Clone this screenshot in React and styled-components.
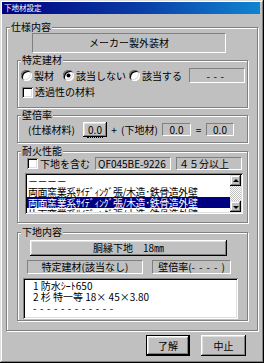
import React from 'react';
import styled, { createGlobalStyle, css } from 'styled-components';

const Global = createGlobalStyle`
  html, body { margin: 0; padding: 0; background: #c0c0c0; }
  body {
    font-family: "Noto Sans CJK JP", "Liberation Sans", sans-serif;
    font-size: 10px;
    color: #000;
  }
  * { box-sizing: border-box; }
`;

const Window = styled.div`
  width: 264px;
  height: 363px;
  background: #c0c0c0;
  padding: 2px 4px 0 2px;
  box-shadow: inset -1px -1px #000, inset 1px 1px #dfdfdf,
    inset -2px -2px #808080, inset 2px 2px #fff;
  display: flex;
  flex-direction: column;
  overflow: hidden;
`;

const TitleBar = styled.div`
  height: 12px;
  background: linear-gradient(90deg, #000080 0%, #0a3fa8 55%, #1084d0 100%);
  color: #fff;
  font-size: 7.5px;
  line-height: 12px;
  padding-left: 2px;
  white-space: nowrap;
`;

const etched = css`
  border: 1px solid #808080;
  box-shadow: inset 1px 1px 0 #fff, 1px 1px 0 #fff;
`;

const OuterGroup = styled.section`
  position: relative;
  ${etched};
  width: 252px;
  height: 304px;
  margin: 13px 0 0 4px;
  display: flex;
  flex-direction: column;
  flex: none;
`;

const Group = styled.section`
  position: relative;
  ${etched};
  width: 231px;
  height: ${p => p.$h}px;
  margin: ${p => p.$mt}px 0 0 10px;
  display: flex;
  flex-direction: column;
  flex: none;
`;

const Legend = styled.span`
  position: absolute;
  top: -7px;
  left: 3px;
  padding: 0 1px;
  background: #c0c0c0;
  line-height: 12px;
  white-space: nowrap;
`;

const Row = styled.div`
  display: flex;
  align-items: center;
  height: ${p => p.$h}px;
  margin-top: ${p => p.$mt}px;
  flex: none;
`;

const Choice = styled.label`
  display: inline-flex;
  align-items: center;
  width: ${p => (p.$w ? `${p.$w}px` : 'auto')};
  margin-left: ${p => p.$ml || 0}px;
  line-height: 12px;
  white-space: nowrap;
  flex: none;
`;

const RadioDot = styled.span`
  position: relative;
  width: 11px;
  height: 11px;
  margin-right: 2px;
  border-radius: 50%;
  background: #fff;
  box-shadow: inset 1px 1px 0 #808080, inset -1px -1px 0 #fff,
    inset 2px 2px 0 #000, inset -2px -2px 0 #dfdfdf;
  flex: none;
  &::after {
    content: '';
    display: ${p => (p.$on ? 'block' : 'none')};
    position: absolute;
    left: 4px;
    top: 4px;
    width: 3px;
    height: 3px;
    border-radius: 50%;
    background: #000;
    box-shadow: 0 0 0 0.5px #000;
  }
`;

const CheckBox = styled.span`
  width: 11px;
  height: 11px;
  margin-right: 2px;
  background: #fff;
  box-shadow: inset 1px 1px 0 #808080, inset -1px -1px 0 #fff,
    inset 2px 2px 0 #000, inset -2px -2px 0 #dfdfdf;
  flex: none;
`;

const Static = styled.div`
  width: ${p => p.$w}px;
  height: ${p => p.$h}px;
  margin-left: ${p => p.$ml || 0}px;
  margin-top: ${p => p.$mt || 0}px;
  padding-left: ${p => p.$pl || 0}px;
  display: flex;
  align-items: center;
  justify-content: ${p => (p.$left ? 'flex-start' : 'center')};
  border: 1px solid;
  border-color: #808080 #fff #fff #808080;
  line-height: 12px;
  white-space: nowrap;
  overflow: hidden;
  flex: none;
`;

const PushButton = styled.button`
  font: inherit;
  color: #000;
  width: ${p => p.$w}px;
  height: ${p => p.$h}px;
  margin: ${p => p.$mt || 0}px 0 0 ${p => p.$ml || 0}px;
  padding: 0;
  background: #c0c0c0;
  border: none;
  line-height: 12px;
  white-space: nowrap;
  flex: none;
  box-shadow: ${p =>
    p.$default
      ? 'inset 0 0 0 1px #000, inset -2px -2px #000, inset 2px 2px #fff, inset -3px -3px #808080, inset 3px 3px #dfdfdf'
      : 'inset -1px -1px #000, inset 1px 1px #fff, inset -2px -2px #808080, inset 2px 2px #dfdfdf'};
`;

const FocusText = styled.span`
  padding: 0 1px;
  border-bottom: 1px dotted #000;
  line-height: 10px;
`;

const Text = styled.span`
  width: ${p => p.$w}px;
  margin-left: ${p => p.$ml || 0}px;
  text-align: ${p => (p.$center ? 'center' : 'left')};
  line-height: 12px;
  white-space: nowrap;
  flex: none;
`;

const Dashes = styled.span`
  letter-spacing: ${p => p.$ls || 3}px;
`;

const sunken2 = css`
  background: #fff;
  box-shadow: inset 1px 1px 0 #808080, inset -1px -1px 0 #fff,
    inset 2px 2px 0 #000, inset -2px -2px 0 #dfdfdf;
`;

const ListBox = styled.div`
  ${sunken2};
  width: 218px;
  height: 41px;
  margin: 3px 0 0 7px;
  padding: 2px;
  display: flex;
  flex: none;
`;

const ListItems = styled.div`
  flex: 1;
  overflow: hidden;
`;

const ListItem = styled.div`
  height: 11px;
  line-height: 11px;
  padding-left: 1px;
  letter-spacing: -0.45px;
  white-space: nowrap;
  overflow: hidden;
  background: ${p => (p.$selected ? '#000080' : 'transparent')};
  color: ${p => (p.$selected ? '#fff' : '#000')};
`;

const ScrollBar = styled.div`
  width: 11px;
  display: flex;
  flex-direction: column;
  flex: none;
`;

const ScrollButton = styled.div`
  height: 11px;
  background: #c0c0c0;
  box-shadow: inset -1px -1px #000, inset 1px 1px #dfdfdf,
    inset -2px -2px #808080, inset 2px 2px #fff;
  display: flex;
  align-items: center;
  justify-content: center;
  flex: none;
`;

const Arrow = styled.span`
  width: 0;
  height: 0;
  border-left: 3px solid transparent;
  border-right: 3px solid transparent;
  ${p =>
    p.$up
      ? 'border-bottom: 3px solid #000; margin-top: -1px;'
      : 'border-top: 3px solid #000; margin-top: 1px;'}
`;

const Track = styled.div`
  flex: 1;
  background: repeating-conic-gradient(#fff 0 25%, #c0c0c0 0 50%) 0 0 / 2px 2px;
`;

const EditBox = styled.div`
  ${sunken2};
  width: 215px;
  height: 41px;
  margin: 4px 0 0 5px;
  padding: 2px 0 0 10px;
  flex: none;
  overflow: hidden;
`;

const EditLine = styled.div`
  height: 11px;
  line-height: 11px;
  white-space: nowrap;
`;

const ButtonBar = styled.div`
  display: flex;
  justify-content: flex-end;
  gap: 11px;
  margin-top: 4px;
  padding-right: 14px;
  flex: none;
`;

const fireOptions = [
  { text: '－－－－' },
  { text: '両面窯業系ｻｲﾃﾞｨﾝｸﾞ張/木造･鉄骨造外壁' },
  { text: '両面窯業系ｻｲﾃﾞｨﾝｸﾞ張/木造･鉄骨造外壁', selected: true },
  { text: '片面窯業系ｻｲﾃﾞｨﾝｸﾞ張/木造･鉄骨造外壁' },
];

export default function App() {
  return (
    <>
      <Global />
      <Window>
        <TitleBar>下地材設定</TitleBar>
        <OuterGroup>
          <Legend>仕様内容</Legend>
          <Static $w={194} $h={20} $ml={25} $mt={5}>メーカー製外装材</Static>

          <Group $h={48} $mt={7}>
            <Legend>特定建材</Legend>
            <Row $h={15} $mt={7}>
              <Choice $w={42} $ml={3}><RadioDot />製材</Choice>
              <Choice $w={66}><RadioDot $on />該当しない</Choice>
              <Choice $w={60}><RadioDot />該当する</Choice>
              <Static $w={56} $h={15}><Dashes $ls={3.5}>---</Dashes></Static>
            </Row>
            <Row $h={12} $mt={3}>
              <Choice $ml={4}><CheckBox />透過性の材料</Choice>
            </Row>
          </Group>

          <Group $h={28} $mt={7}>
            <Legend>壁倍率</Legend>
            <Row $h={15} $mt={6}>
              <Text $w={55} $ml={10}>(仕様材料)</Text>
              <PushButton $w={24} $h={15}><FocusText>0.0</FocusText></PushButton>
              <Text $w={14} $center>+</Text>
              <Text $w={41}>(下地材)</Text>
              <Static $w={29} $h={13}>0.0</Static>
              <Text $w={15} $center>=</Text>
              <Static $w={28} $h={13}>0.0</Static>
            </Row>
          </Group>

          <Group $h={72} $mt={8}>
            <Legend>耐火性能</Legend>
            <Row $h={13} $mt={5}>
              <Choice $w={68} $ml={9}><CheckBox />下地を含む</Choice>
              <Static $w={76} $h={13} $left $pl={2}>QF045BE-9226</Static>
              <Static $w={66} $h={13} $ml={5} $left $pl={2}>４５分以上</Static>
            </Row>
            <ListBox>
              <ListItems>
                {fireOptions.map((o, i) => (
                  <ListItem key={i} $selected={o.selected}>{o.text}</ListItem>
                ))}
              </ListItems>
              <ScrollBar>
                <ScrollButton><Arrow $up /></ScrollButton>
                <Track />
                <ScrollButton><Arrow /></ScrollButton>
              </ScrollBar>
            </ListBox>
          </Group>

          <Group $h={89} $mt={9}>
            <Legend>下地内容</Legend>
            <PushButton $w={197} $h={16} $mt={7} $ml={12}>胴縁下地　18㎜</PushButton>
            <Row $h={14} $mt={4}>
              <Static $w={116} $h={14} $ml={9}>特定建材(該当なし)</Static>
              <Static $w={79} $h={14} $ml={9}>壁倍率(<Dashes $ls={4}> ----</Dashes> )</Static>
            </Row>
            <EditBox>
              <EditLine>1 防水ｼｰﾄ650</EditLine>
              <EditLine>2 杉 特一等 18× 45×3.80</EditLine>
              <EditLine><Dashes $ls={3.5}>------------</Dashes></EditLine>
            </EditBox>
          </Group>
        </OuterGroup>

        <ButtonBar>
          <PushButton $w={44} $h={21} $default>了解</PushButton>
          <PushButton $w={45} $h={21}>中止</PushButton>
        </ButtonBar>
      </Window>
    </>
  );
}
